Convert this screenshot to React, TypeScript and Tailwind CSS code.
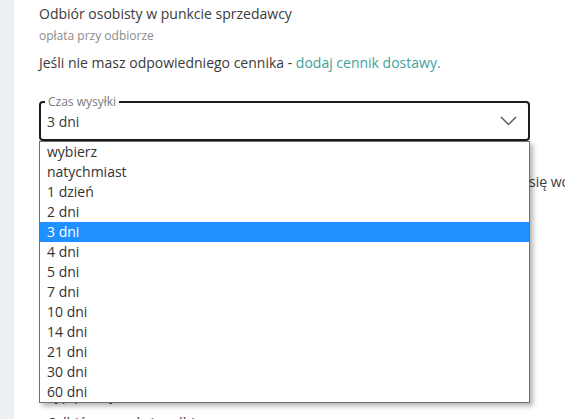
import React, { useState } from "react";

const options = [
  "wybierz",
  "natychmiast",
  "1 dzień",
  "2 dni",
  "3 dni",
  "4 dni",
  "5 dni",
  "7 dni",
  "10 dni",
  "14 dni",
  "21 dni",
  "30 dni",
  "60 dni",
];

const App: React.FC = () => {
  const [value, setValue] = useState("3 dni");

  return (
    <div className="flex h-[419px] w-[565px] overflow-hidden bg-white font-['Open_Sans',sans-serif] text-[#3a3a3a]">
      <div className="w-[14px] shrink-0 bg-[#edf0f3]" />
      <div className="flex-1 pl-[25px] pt-[4px]">
        <h3 className="text-[14px] leading-[20px]">Odbiór osobisty w punkcie sprzedawcy</h3>
        <p className="mt-[4px] text-[12px] leading-[16px] text-[#8c8c8c]">opłata przy odbiorze</p>
        <p className="mt-[9px] text-[14px] leading-[20px]">
          Jeśli nie masz odpowiedniego cennika -{" "}
          <a href="#" className="text-[#3ea39a]">
            dodaj cennik dostawy.
          </a>
        </p>

        <div className="relative mt-[21px] w-[491px]">
          <fieldset className="rounded-[4px] border-2 border-[#1c1c1c] pb-[7px] pl-[4px] pr-[11px]">
            <legend className="px-[3px] text-[12px] leading-[16px] text-[#7a7a7a]">Czas wysyłki</legend>
            <div className="mt-[2px] flex items-center justify-between pl-[2px]">
              <span className="text-[14px] leading-[20px]">{value}</span>
              <svg width="17" height="10" viewBox="0 0 17 10" className="mt-[-2px]">
                <polyline points="1,1 8.5,8.5 16,1" fill="none" stroke="#5c5c5c" strokeWidth="1.5" />
              </svg>
            </div>
          </fieldset>

          <ul className="absolute left-0 top-full z-10 w-[491px] border border-[#707070] bg-white shadow-[3px_3px_5px_rgba(0,0,0,0.3)]">
            {options.map((opt) => (
              <li
                key={opt}
                onClick={() => setValue(opt)}
                className={
                  opt === value
                    ? "h-[20px] bg-[#1e90ff] pl-[7px] text-[14px] leading-[20px] text-white"
                    : "h-[20px] pl-[7px] text-[14px] leading-[20px] text-[#333]"
                }
              >
                {opt}
              </li>
            ))}
          </ul>
        </div>

        <p className="mt-[31px] whitespace-nowrap text-[14px] leading-[20px]">
          <span className="inline-block w-[490px] overflow-hidden align-top">
            Zaznacz, jeśli czas wysyłki ma być liczony od chwili, gdy płatność znajdzie
          </span>
          się wówczas w systemie
        </p>
        <p className="mt-[8px] text-[14px] leading-[20px]">Czas wysyłki liczony jest w dniach roboczych.</p>

        <div className="mt-[165px] pl-[8px] text-[14px] leading-[20px]">
          <p>Typ przesyłki</p>
          <p className="mt-[8px]">Odbiór w punkcie odbioru</p>
        </div>
      </div>
    </div>
  );
};

export default App;
